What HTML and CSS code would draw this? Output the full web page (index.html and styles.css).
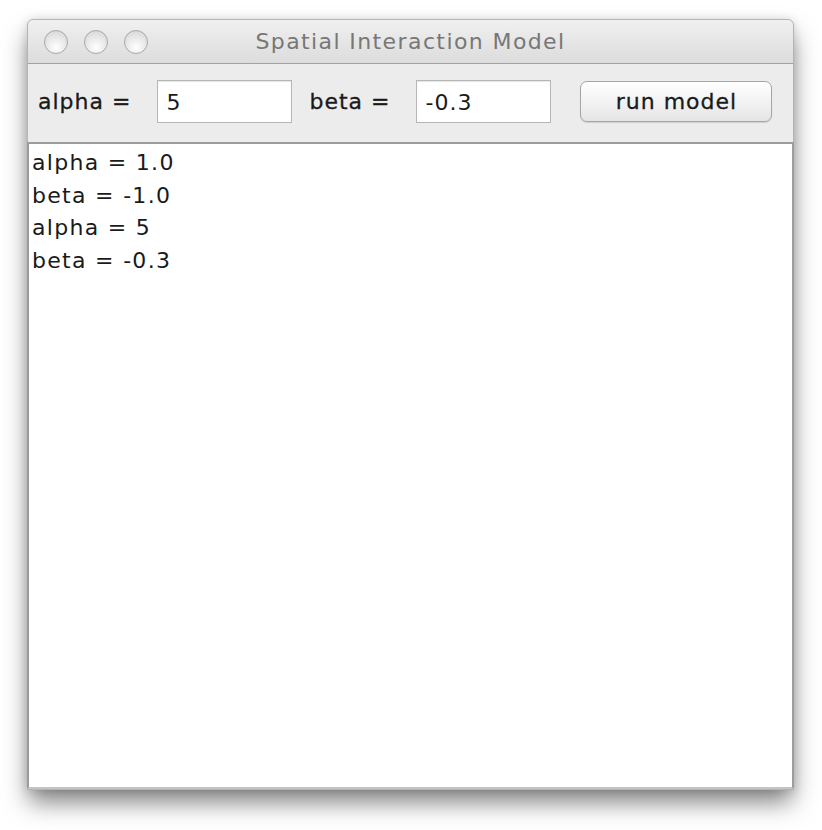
FILE: index.html
```html
<!DOCTYPE html>
<html lang="en">
<head>
    <meta charset="UTF-8">
    <title>Spatial Interaction Model</title>
    <link rel="stylesheet" href="styles.css">
</head>
<body>
    <div class="window">
        <div class="titlebar">
            <div class="lights">
                <span class="light"></span>
                <span class="light"></span>
                <span class="light"></span>
            </div>
            <div class="title">Spatial Interaction Model</div>
        </div>

        <div class="toolbar">
            <label class="lbl">alpha =</label>
            <input class="field" type="text" value="5">
            <label class="lbl">beta =</label>
            <input class="field" type="text" value="-0.3">
            <button class="run">run model</button>
        </div>

        <div class="output">alpha = 1.0
beta = -1.0
alpha = 5
beta = -0.3</div>
    </div>
</body>
</html>
```

FILE: styles.css
```css
html, body { margin: 0; background: #fff; font-family: "DejaVu Sans", sans-serif; }
body { min-height: 830px; padding-top: 19px; box-sizing: border-box; }
.window { margin-left: 27px; width: 767px; height: 771px; display: flex; flex-direction: column; border: 1px solid #b4b4b4; border-radius: 6px 6px 0 0; box-sizing: border-box; background: #ececec; box-shadow: 0 14px 24px -2px rgba(0,0,0,0.5), 0 0 10px rgba(0,0,0,0.12); }
.titlebar { position: relative; height: 43px; flex: none; display: flex; align-items: center; border-bottom: 1px solid #a2a2a2; background: linear-gradient(#f0f0f0, #dcdcdc); border-radius: 6px 6px 0 0; }
.lights { display: flex; gap: 16px; padding-left: 16px; }
.light { width: 22px; height: 22px; border-radius: 50%; border: 1px solid #a8a8a8; background: radial-gradient(circle at 50% 75%, #ffffff, #e4e4e4 60%, #d0d0d0); }
.title { position: absolute; left: 0; right: 0; top: 0; bottom: 0; display: flex; align-items: center; justify-content: center; color: #777; font-size: 22px; letter-spacing: 1.4px; pointer-events: none; }
.toolbar { height: 78px; flex: none; display: flex; align-items: center; padding: 0 0 4px 10px; box-sizing: border-box; }
.lbl { font-size: 22px; letter-spacing: 1px; color: #1a1a1a; -webkit-text-stroke: 0.3px #1a1a1a; }
.lbl:first-child { margin-right: 26px; }
.field { width: 135px; height: 43px; box-sizing: border-box; border: 1px solid #b6b6b6; box-shadow: inset 0 1px 1px rgba(0,0,0,0.1); padding: 2px 0 0 8px; font-family: "DejaVu Sans", sans-serif; font-size: 22px; letter-spacing: 1px; color: #1a1a1a; background: #fff; outline: none; }
.field + .lbl { margin: 0 26px 0 17px; }
.run { margin-left: 29px; width: 192px; height: 41px; border: 1px solid #a6a6a6; border-radius: 7px; background: linear-gradient(#ffffff, #f0f0f0 60%, #e4e4e4); font-family: "DejaVu Sans", sans-serif; font-size: 22px; letter-spacing: 1px; color: #1a1a1a; -webkit-text-stroke: 0.3px #1a1a1a; padding: 0; box-shadow: 0 1px 1px rgba(0,0,0,0.12); }
.output { flex: 1; background: #fff; border: 2px solid #9c9c9c; border-bottom-color: #c4c4c4; margin: 0 -1px; white-space: pre; font-size: 22px; letter-spacing: 1.3px; line-height: 32.5px; color: #1a1a1a; padding: 3px 0 0 3px; }
```
